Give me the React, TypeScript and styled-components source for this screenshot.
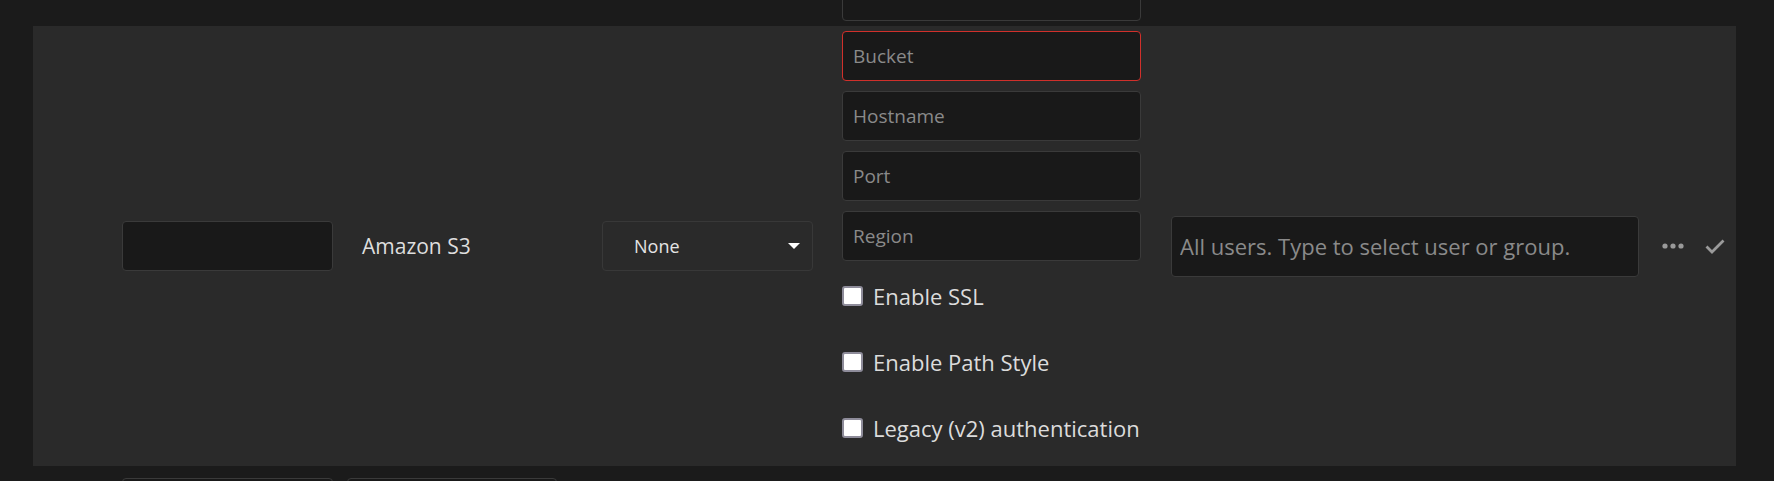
import React from "react";
import styled, { createGlobalStyle } from "styled-components";

const Global = createGlobalStyle`
  html, body {
    margin: 0;
    padding: 0;
    height: 481px;
    overflow: hidden;
    background: #1b1b1b;
  }
  * { box-sizing: border-box; }
  body {
    font-family: "Open Sans", "Noto Sans", sans-serif;
    font-size: 20px;
    color: #dcdcdc;
  }
`;

const Page = styled.div`
  padding: 26px 38px 0 33px;
  display: flex;
  flex-direction: column;
  gap: 12px;
`;

const Row = styled.div<{ $panel?: boolean }>`
  display: grid;
  grid-template-columns: 225px 255px 240px 329px 491px auto;
  align-items: ${(p) => (p.$panel ? "center" : "start")};
  padding-left: 89px;
  height: ${(p) => (p.$panel ? "440px" : "50px")};
  background: ${(p) => (p.$panel ? "#2a2a2a" : "transparent")};
`;

const TextInput = styled.input<{ $w?: number; $h?: number; $error?: boolean; $size?: number; $pad?: number }>`
  width: ${(p) => p.$w ?? 300}px;
  height: ${(p) => p.$h ?? 50}px;
  background: #191919;
  border: 1px solid ${(p) => (p.$error ? "#d0302b" : "#3a3a3a")};
  border-radius: 4px;
  padding: 0 10px 0 ${(p) => p.$pad ?? 10}px;
  font-family: inherit;
  font-size: ${(p) => p.$size ?? 19}px;
  color: #dcdcdc;
  outline: none;
  &::placeholder {
    color: #8a8a8a;
  }
`;

const NameBox = styled.div`
  width: 211px;
  height: 50px;
  background: #191919;
  border: 1px solid #3a3a3a;
  border-radius: 4px;
`;

const Backend = styled.span`
  padding-left: 15px;
  font-size: 21px;
  color: #dedede;
`;

const Select = styled.div`
  width: 211px;
  height: 50px;
  border: 1px solid #383838;
  border-radius: 4px;
  background: #2a2a2a;
  display: flex;
  align-items: center;
  justify-content: space-between;
  padding: 0 12px 0 31px;
  font-size: 18px;
  color: #e4e4e4;
`;

const Caret = styled.span`
  width: 0;
  height: 0;
  border-left: 6px solid transparent;
  border-right: 6px solid transparent;
  border-top: 6px solid #ffffff;
`;

const ConfigColumn = styled.div`
  align-self: start;
  margin-top: -55px;
  display: flex;
  flex-direction: column;
`;

const InputStack = styled.div`
  display: flex;
  flex-direction: column;
  gap: 10px;
  margin-bottom: 2px;
`;

const CheckRow = styled.label`
  height: 66px;
  display: flex;
  align-items: center;
  gap: 10px;
  font-size: 22px;
  color: #dcdcdc;
  white-space: nowrap;
`;

const Check = styled.input.attrs({ type: "checkbox" })`
  appearance: none;
  margin: 0;
  width: 21px;
  height: 20px;
  border: 2px solid #8e8c9a;
  border-radius: 3px;
  background: #ffffff;
`;

const Actions = styled.div`
  display: flex;
  align-items: center;
  gap: 21px;
  color: #9a9a9a;
`;

const IconButton = styled.span`
  display: flex;
  align-items: center;
`;

export default function App() {
  return (
    <>
      <Global />
      <Page>
        <Row $panel>
          <NameBox />
          <Backend>Amazon S3</Backend>
          <Select>
            <span>None</span>
            <Caret />
          </Select>
          <ConfigColumn>
            <InputStack>
              <TextInput $w={299} />
              <TextInput $w={299} $error placeholder="Bucket" />
              <TextInput $w={299} placeholder="Hostname" />
              <TextInput $w={299} placeholder="Port" />
              <TextInput $w={299} placeholder="Region" />
            </InputStack>
            <CheckRow>
              <Check />
              Enable SSL
            </CheckRow>
            <CheckRow>
              <Check />
              Enable Path Style
            </CheckRow>
            <CheckRow>
              <Check />
              Legacy (v2) authentication
            </CheckRow>
          </ConfigColumn>
          <TextInput
            $w={468}
            $h={61}
            $pad={8}
            $size={22}
            placeholder="All users. Type to select user or group."
          />
          <Actions>
            <IconButton>
              <svg width="22" height="6" viewBox="0 0 22 6">
                <circle cx="3" cy="3" r="2.6" fill="currentColor" />
                <circle cx="11" cy="3" r="2.6" fill="currentColor" />
                <circle cx="19" cy="3" r="2.6" fill="currentColor" />
              </svg>
            </IconButton>
            <IconButton>
              <svg width="20" height="15" viewBox="0 0 20 15">
                <polyline
                  points="1.5,7.5 7,13 18.5,1.5"
                  fill="none"
                  stroke="currentColor"
                  strokeWidth="2.8"
                />
              </svg>
            </IconButton>
          </Actions>
        </Row>
        <Row>
          <TextInput $w={211} />
          <TextInput $w={210} />
        </Row>
      </Page>
    </>
  );
}
